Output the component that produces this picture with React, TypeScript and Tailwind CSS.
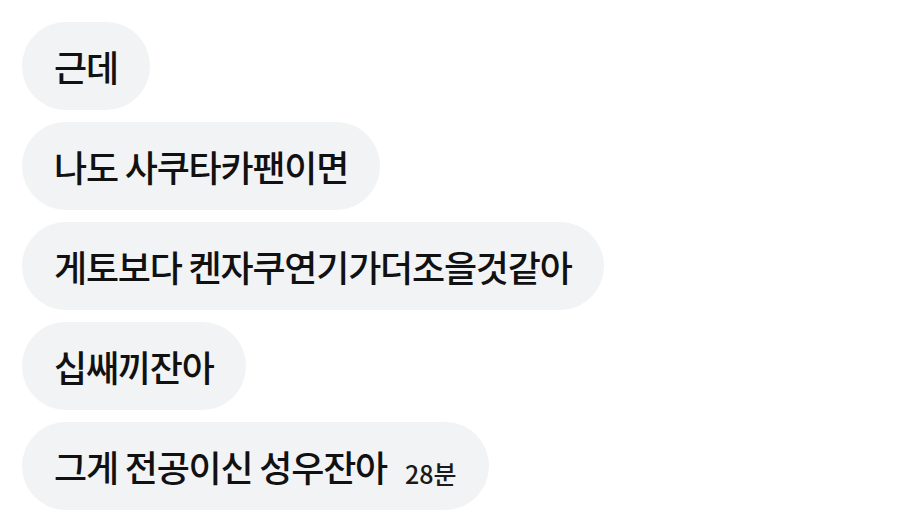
const messages = [
  '근데',
  '나도 사쿠타카팬이면',
  '게토보다 켄자쿠연기가더조을것같아',
  '십쌔끼잔아',
  '그게 전공이신 성우잔아',
];

const Bubble = ({ text, time }: { text: string; time?: string }) => (
  <div className="flex h-[88px] items-center rounded-full bg-[#f1f3f4] px-8">
    <span className="whitespace-nowrap text-[36px] font-medium leading-none tracking-[-1.2px] text-[#111111]">
      {text}
    </span>
    {time && (
      <span className="ml-[18px] self-end mb-[24px] whitespace-nowrap text-[25px] font-medium leading-none text-[#1a1a1a]">
        {time}
      </span>
    )}
  </div>
);

const App = () => {
  return (
    <div
      className="h-[530px] w-[900px] overflow-hidden bg-white pl-[22px] pt-[22px]"
      style={{ fontFamily: '"Noto Sans CJK KR", "Noto Sans", sans-serif' }}
    >
      <div className="flex flex-col items-start gap-3">
        {messages.map((m, i) => (
          <Bubble key={i} text={m} time={i === messages.length - 1 ? '28분' : undefined} />
        ))}
      </div>
    </div>
  );
};

export default App;
